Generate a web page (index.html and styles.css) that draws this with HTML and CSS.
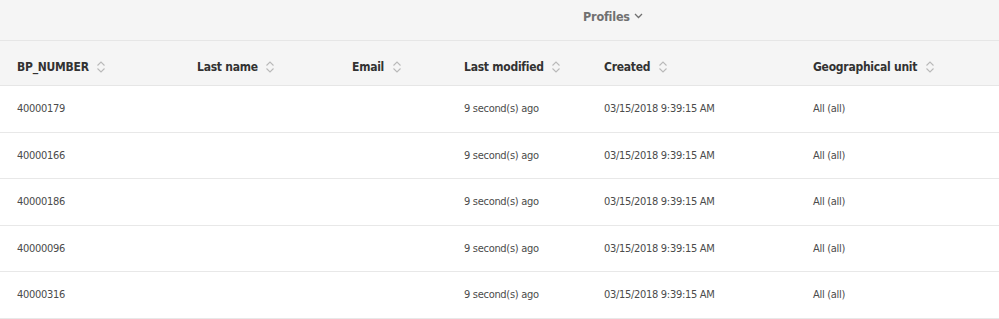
FILE: index.html
```html
<!DOCTYPE html>
<html lang="en">
<head>
    <meta charset="UTF-8">
    <title>Profiles</title>
    <link rel="stylesheet" href="styles.css">
</head>
<body>
    <div class="topbar">
        <button class="view-switch">Profiles
            <svg class="chevron" width="9" height="6" viewBox="0 0 9 6"><path d="M1 1l3.5 3.5L8 1" fill="none" stroke="currentColor" stroke-width="1.3"/></svg>
        </button>
    </div>
    <table class="grid">
        <thead>
            <tr>
                <th class="c1">BP_NUMBER <span class="sort"></span></th>
                <th class="c2">Last name <span class="sort"></span></th>
                <th class="c3">Email <span class="sort"></span></th>
                <th class="c4">Last modified <span class="sort"></span></th>
                <th class="c5">Created <span class="sort"></span></th>
                <th class="c6">Geographical unit <span class="sort"></span></th>
            </tr>
        </thead>
        <tbody id="rows"></tbody>
    </table>
    <script>
        const ids = ['40000179', '40000166', '40000186', '40000096', '40000316'];
        const tbody = document.getElementById('rows');
        ids.forEach(function(id) {
            const tr = document.createElement('tr');
            tr.innerHTML = '<td class="c1">' + id + '</td><td></td><td></td>' +
                '<td>9 second(s) ago</td><td>03/15/2018 9:39:15 AM</td><td>All (all)</td>';
            tbody.appendChild(tr);
        });
        document.querySelectorAll('.sort').forEach(function(s) {
            s.innerHTML = '<svg width="10" height="14" viewBox="0 0 10 14"><path d="M1.5 5.5L5 2l3.5 3.5M1.5 8.5L5 12l3.5-3.5" fill="none" stroke="currentColor" stroke-width="1.1"/></svg>';
        });
    </script>
</body>
</html>
```

FILE: styles.css
```css
body {
    margin: 0;
    padding: 0;
    background: #fff;
    font-family: "DejaVu Sans Condensed", "Liberation Sans", sans-serif;
    color: #4b4b4b;
}
.topbar {
    height: 41px;
    background: #f5f5f5;
    border-bottom: 1px solid #e6e6e6;
    box-sizing: border-box;
    padding-left: 583px;
    display: flex;
    align-items: center;
}
.view-switch {
    background: none;
    border: none;
    padding: 0;
    font-family: inherit;
    font-size: 12.5px;
    font-weight: bold;
    letter-spacing: -0.2px;
    color: #707070;
    display: flex;
    align-items: center;
    gap: 4px;
    margin-top: -8px;
    cursor: pointer;
}
.grid {
    width: 100%;
    border-collapse: collapse;
    table-layout: fixed;
}
.grid th,
.grid td {
    padding: 0;
    text-align: left;
    white-space: nowrap;
}
.grid th {
    height: 36px;
    padding-top: 8px;
    background: #f5f5f5;
    font-size: 12px;
    font-weight: bold;
    letter-spacing: -0.25px;
    color: #323232;
    border-bottom: 1px solid #e6e6e6;
}
.grid td {
    height: 45.5px;
    font-size: 11px;
    letter-spacing: -0.3px;
    border-bottom: 1px solid #e8e8e8;
}
.grid .c1 { width: 180px; padding-left: 17px; }
.grid .c2 { width: 155px; }
.grid .c3 { width: 112px; }
.grid .c4 { width: 140px; }
.grid .c5 { width: 209px; }
.sort {
    display: inline-block;
    vertical-align: middle;
    margin-left: 4px;
    color: #b9b9b9;
    line-height: 0;
}
```
